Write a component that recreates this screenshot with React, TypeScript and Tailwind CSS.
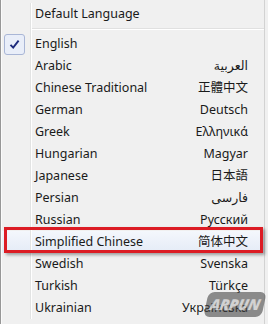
const languages: [string, string][] = [
  ["English", ""],
  ["Arabic", "العربية"],
  ["Chinese Traditional", "正體中文"],
  ["German", "Deutsch"],
  ["Greek", "Ελληνικά"],
  ["Hungarian", "Magyar"],
  ["Japanese", "日本語"],
  ["Persian", "فارسی"],
  ["Russian", "Русский"],
  ["Simplified Chinese", "简体中文"],
  ["Swedish", "Svenska"],
  ["Turkish", "Türkçe"],
  ["Ukrainian", "Українська"],
];

function CheckBox() {
  return (
    <div className="ml-[2px] flex h-[21px] w-[21px] items-center justify-center rounded-[3px] border border-[#a9b6d6] bg-[#e9eef9]">
      <svg width="11" height="11" viewBox="0 0 11 11">
        <path d="M1.5 5.8 L4.2 8.6 L9.6 1.6" fill="none" stroke="#1c2a7c" strokeWidth="1.9" />
      </svg>
    </div>
  );
}

function Row({ label, native, checked, hover }: { label: string; native?: string; checked?: boolean; hover?: boolean }) {
  return (
    <div className={`flex h-[22px] items-stretch ${hover ? "bg-gradient-to-b from-[#f4f7fc] to-[#e4ebf6]" : ""}`}>
      <div className="flex w-[29px] shrink-0 items-center border-r border-[#e2e3e3]">
        {checked && <CheckBox />}
      </div>
      <div className="flex flex-1 items-center justify-between border-l border-white pl-[3px] pr-[16px]">
        <span>{label}</span>
        {native && <span>{native}</span>}
      </div>
    </div>
  );
}

export default function App() {
  return (
    <div className="relative h-[324px] w-[268px] overflow-hidden bg-[#f0f0f0] text-[12.5px] leading-none text-[#1a1a1a] [font-family:'Noto_Sans','DejaVu_Sans','Noto_Sans_CJK_SC',sans-serif]">
      <div className="h-full w-[265px] border-l border-r border-l-[#979797] border-r-[#d2d2d2]">
        <div className="h-full border-l border-[#fbfbfb] pt-[3px]">
          <Row label="Default Language" />

          {/* separator */}
          <div className="flex h-[8px] items-stretch">
            <div className="w-[29px] shrink-0 border-r border-[#e2e3e3]" />
            <div className="flex flex-1 flex-col justify-center border-l border-white">
              <div className="h-[1px] bg-[#e0e0e0]" />
              <div className="h-[1px] bg-white" />
            </div>
          </div>

          {languages.map(([label, native]) => (
            <Row
              key={label}
              label={label}
              native={native}
              checked={label === "English"}
              hover={label === "Simplified Chinese"}
            />
          ))}
        </div>
      </div>

      {/* red annotation box */}
      <div className="absolute left-[4px] top-[227px] h-[26px] w-[259px] border-[3px] border-[#dc1c24] shadow-[2px_2px_3px_rgba(0,0,0,0.35)]" />

      {/* watermark, semi-transparent over the last row */}
      <div className="absolute left-[206px] top-[292px] flex h-[25px] w-[58px] -skew-x-12 items-center justify-center rounded-[6px] bg-[rgba(70,70,70,0.6)]">
        <span className="text-[15px] font-black italic tracking-tight text-[rgba(235,235,235,0.75)]">ARPUN</span>
      </div>
    </div>
  );
}
